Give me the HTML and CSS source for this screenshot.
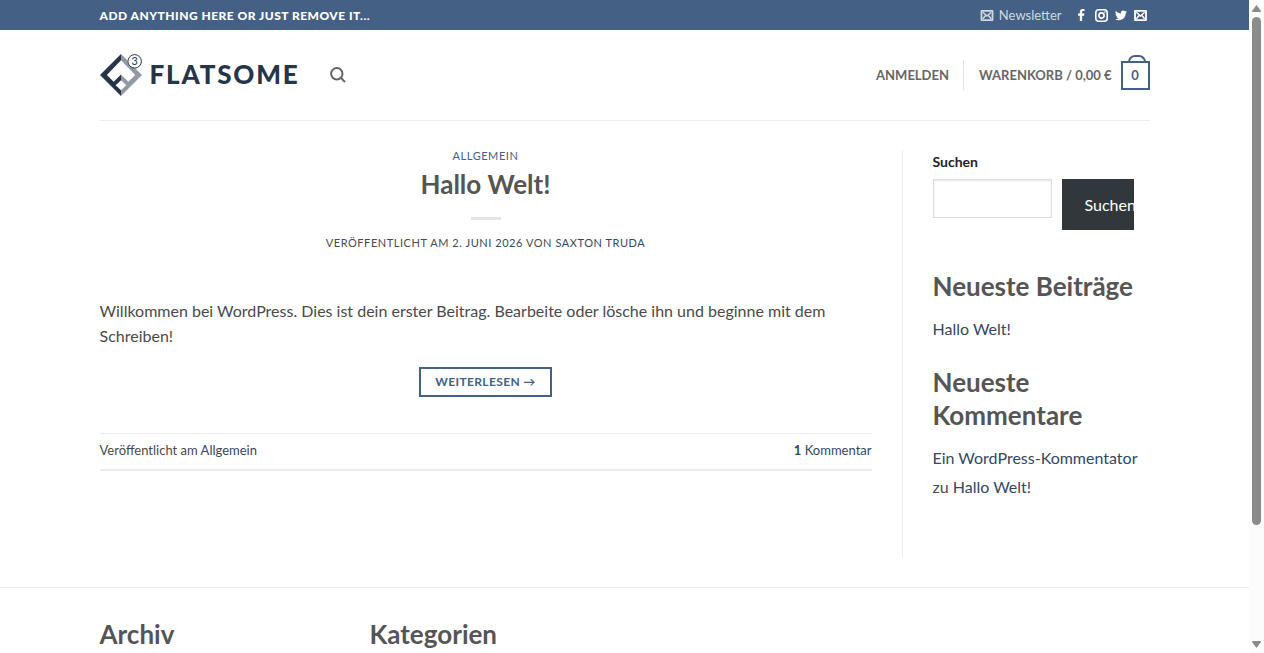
FILE: index.html
```
<!DOCTYPE html>
<html lang="de">
<head>
    <meta charset="UTF-8">
    <meta name="viewport" content="width=device-width, initial-scale=1">
    <title>Flatsome</title>
    <link rel="stylesheet" href="styles.css">
</head>
<body>
<div class="page">
    <header>
        <div class="top-bar">
            <div class="container top-inner">
                <strong class="top-text">Add anything here or just remove it...</strong>
                <nav class="top-nav">
                    <a class="newsletter" href="#">
                        <svg class="icon-mail" viewBox="0 0 14 12"><path fill-rule="evenodd" d="M1 0H13Q14 0 14 1V11Q14 12 13 12H1Q0 12 0 11V1Q0 0 1 0ZM2 2V10H12V2Z"/><path class="line" d="M2.500 2.500L7 6.500L11.500 2.500M2.500 9.500L5.500 6M11.500 9.500L8.500 6"/></svg>
                        Newsletter
                    </a>
                    <span class="social">
                        <a href="#" aria-label="Facebook"><svg class="icon-fb" viewBox="0 0 8 13"><path d="M2.200 13V7.200H.3V4.800H2.200V3.100C2.200 1.100 3.300 0 5.200 0C6.200 0 7 .1 7.200.1V2.200H5.900C4.900 2.200 4.700 2.700 4.700 3.400V4.800H7.100L6.800 7.200H4.700V13Z"/></svg></a>
                        <a href="#" aria-label="Instagram"><svg class="icon-ig" viewBox="0 0 13 13"><rect class="ring" x=".8" y=".8" width="11.400" height="11.400" rx="3"/><circle class="ring" cx="6.500" cy="6.500" r="2.600"/><circle cx="9.900" cy="3.100" r=".8"/></svg></a>
                        <a href="#" aria-label="Twitter"><svg class="icon-tw" viewBox="0 0 24 20"><path d="M24 2.400a10 10 0 0 1-2.800.8A5 5 0 0 0 23.300.5a10 10 0 0 1-3.100 1.200 4.900 4.900 0 0 0-8.400 4.500A14 14 0 0 1 1.700 1a4.900 4.900 0 0 0 1.500 6.600A5 5 0 0 1 1 7v.1a4.900 4.900 0 0 0 3.900 4.800 5 5 0 0 1-2.200.1 4.900 4.900 0 0 0 4.600 3.400A10 10 0 0 1 0 17.500a14 14 0 0 0 7.500 2.200c9.100 0 14-7.500 14-14V5A10 10 0 0 0 24 2.400Z"/></svg></a>
                        <a href="#" aria-label="E-Mail"><svg class="icon-mail" viewBox="0 0 14 12"><path fill-rule="evenodd" d="M1 0H13Q14 0 14 1V11Q14 12 13 12H1Q0 12 0 11V1Q0 0 1 0ZM2 2V10H12V2Z"/><path class="line" d="M2.500 2.500L7 6.500L11.500 2.500M2.500 9.500L5.500 6M11.500 9.500L8.500 6"/></svg></a>
                    </span>
                </nav>
            </div>
        </div>

        <div class="container">
            <div class="header-main">
                <a class="logo" href="#">
                    <svg class="logo-mark" viewBox="0 0 43 43">
                        <path class="dark" d="M21.500 0V6.500L7 21.500L14 28.500L21.500 21V27L16 32L21.500 37V43L0 21.500Z"/>
                        <path class="grey" d="M21.500 0L28 6.500Q28 10 30 12.500Q32 14.500 36 14.500L43 21.500L21.500 43V37L27 32L21.500 27V21L29 28.500L36 21.500L21.500 6.500Z"/>
                        <circle cx="35.500" cy="7.500" r="6.900"/>
                        <text x="35.500" y="11.300">3</text>
                    </svg>
                    <span class="logo-text">FLATSOME</span>
                </a>
                <a class="search-link" href="#" aria-label="Suche">
                    <svg class="icon-search" viewBox="0 0 16 16"><circle cx="6.800" cy="6.800" r="5.700"/><path d="M11 11L15 15"/></svg>
                </a>
                <nav class="header-nav">
                    <a class="login" href="#">Anmelden</a>
                    <a class="cart" href="#">Warenkorb / 0,00 € <span class="cart-icon">0</span></a>
                </nav>
            </div>
        </div>
    </header>

    <div class="container content">
        <main class="blog">
            <article>
                <div class="entry-header">
                    <a class="category" href="#">Allgemein</a>
                    <h2><a href="#">Hallo Welt!</a></h2>
                    <div class="divider"></div>
                    <p class="meta">Veröffentlicht am <a href="#">2. Juni 2026</a> von <a href="#">Saxton Truda</a></p>
                </div>
                <p class="entry-text">Willkommen bei WordPress. Dies ist dein erster Beitrag. Bearbeite oder lösche ihn und beginne mit dem Schreiben!</p>
                <div class="more">
                    <a class="more-link" href="#">Weiterlesen <span>→</span></a>
                </div>
                <footer class="entry-footer">
                    <span>Veröffentlicht am <a href="#">Allgemein</a></span>
                    <a href="#"><strong>1</strong> Kommentar</a>
                </footer>
            </article>
        </main>

        <aside class="sidebar">
            <form class="search-form">
                <label for="s">Suchen</label>
                <div class="search-row">
                    <input type="search" id="s">
                    <button type="button">Suchen</button>
                </div>
            </form>
            <section class="widget">
                <h2>Neueste Beiträge</h2>
                <p><a href="#">Hallo Welt!</a></p>
            </section>
            <section class="widget">
                <h2>Neueste Kommentare</h2>
                <p><a href="#">Ein WordPress-Kommentator</a> zu <a href="#">Hallo Welt!</a></p>
            </section>
        </aside>
    </div>

    <footer class="footer">
        <div class="container footer-row">
            <h2>Archiv</h2>
            <h2>Kategorien</h2>
        </div>
    </footer>
</div>

<div class="scrollbar">
    <svg viewBox="0 0 9 7"><path d="M4.500 0L9 6Q9 7 8 7H1Q0 7 0 6Z"/></svg>
    <div class="track"><div class="thumb"></div></div>
    <svg viewBox="0 0 9 7"><path d="M4.500 7L9 1Q9 0 8 0H1Q0 0 0 1Z"/></svg>
</div>
</body>
</html>
```

FILE: styles.css
```
* {
    box-sizing: border-box;
}

body {
    margin: 0;
    display: flex;
    height: 100vh;
    overflow: hidden;
    background: #fff;
    color: #4a4a4a;
    font-family: Lato, "Open Sans", sans-serif;
    font-size: 16px;
    line-height: 25px;
}

a {
    color: #334862;
    text-decoration: none;
}

h2 {
    margin: 0;
    color: #555;
    font-size: 26px;
    line-height: 33px;
    font-weight: 700;
}

p {
    margin: 0;
}

svg {
    display: block;
    fill: currentColor;
}

.page {
    flex: 1;
    min-width: 0;
    overflow: hidden;
}

.container {
    max-width: 1080px;
    margin: 0 auto;
    padding: 0 15px;
}

/* top bar */
.top-bar {
    background: #446084;
}

.top-inner {
    display: flex;
    justify-content: space-between;
    align-items: center;
    height: 30px;
}

.top-text {
    color: #fff;
    font-size: 12px;
    font-weight: 900;
    letter-spacing: 0.04em;
    text-transform: uppercase;
}

.top-nav,
.newsletter,
.social {
    display: flex;
    align-items: center;
}

.top-nav {
    gap: 13px;
    padding-right: 3px;
}

.newsletter {
    gap: 5px;
    color: #d1d8e1;
    font-size: 13px;
}

.social {
    gap: 7px;
}

.social a {
    color: #fff;
}

.icon-mail {
    width: 14px;
    height: 11px;
}

.social .icon-mail {
    width: 13px;
}

.icon-mail .line {
    fill: none;
    stroke: currentColor;
    stroke-width: 1.6;
}

.icon-fb {
    width: 13px;
    height: 12px;
}

.icon-ig {
    width: 13px;
    height: 13px;
}

.icon-ig .ring {
    fill: none;
    stroke: currentColor;
    stroke-width: 1.6;
}

.icon-tw {
    width: 12px;
    height: 11px;
}

/* header */
.header-main {
    display: flex;
    align-items: center;
    height: 91px;
    border-bottom: 1px solid #ececec;
}

.logo {
    display: flex;
    align-items: center;
    gap: 8px;
    color: #26354a;
}

.logo-mark {
    width: 42px;
    height: 42px;
}

.logo-mark .dark {
    fill: #26354a;
}

.logo-mark .grey {
    fill: #9299a4;
}

.logo-mark circle {
    fill: none;
    stroke: #26354a;
}

.logo-mark text {
    font-size: 11px;
    text-anchor: middle;
}

.logo-text {
    padding-bottom: 2px;
    font-size: 26px;
    font-weight: 900;
    letter-spacing: 0.07em;
}

.search-link {
    margin-left: 30px;
    color: #666;
}

.icon-search {
    width: 16px;
    height: 16px;
    fill: none;
    stroke: currentColor;
    stroke-width: 2;
}

.header-nav {
    display: flex;
    align-items: center;
    margin-left: auto;
    line-height: 30px;
    font-size: 13px;
    font-weight: 700;
    text-transform: uppercase;
}

.header-nav a {
    color: #666;
}

.login {
    padding-right: 14px;
    border-right: 1px solid #e2e2e2;
}

.cart {
    display: flex;
    align-items: center;
    gap: 9px;
    padding-left: 15px;
}

.cart-icon {
    position: relative;
    width: 29px;
    height: 29px;
    margin-top: 1px;
    border: 2px solid #446084;
    color: #446084;
    line-height: 24px;
    text-align: center;
}

.cart-icon::after {
    content: "";
    position: absolute;
    left: 50%;
    bottom: 100%;
    width: 14px;
    height: 6px;
    margin-left: -7px;
    border: 2px solid #446084;
    border-bottom: 0;
    border-radius: 7px 7px 0 0;
}

/* blog */
.content {
    display: flex;
    gap: 30px;
    padding-top: 29px;
    padding-bottom: 30px;
}

.blog {
    flex: 1;
    min-width: 0;
}

.entry-header {
    display: flex;
    flex-direction: column;
    align-items: center;
    padding-bottom: 47px;
}

.category {
    font-size: 11px;
    line-height: 11px;
    letter-spacing: 0.05em;
    text-transform: uppercase;
    color: #446084;
    margin-bottom: 7px;
}

.entry-header h2 a {
    color: #555;
}

.divider {
    width: 30px;
    height: 3px;
    margin: 16px 0 15px;
    background: #e5e5e5;
}

.meta {
    font-size: 11px;
    line-height: 16px;
    letter-spacing: 0.05em;
    text-transform: uppercase;
}

.more {
    padding: 19px 0 36px;
    text-align: center;
}

.more-link {
    display: inline-block;
    padding: 0 14px;
    border: 2px solid #446084;
    color: #446084;
    font-size: 12px;
    font-weight: 700;
    line-height: 26px;
    letter-spacing: 0.03em;
    text-transform: uppercase;
    vertical-align: top;
}

.entry-footer {
    display: flex;
    justify-content: space-between;
    padding: 6px 0 8px;
    border-top: 1px solid #ececec;
    border-bottom: 2px solid #ececec;
    font-size: 13px;
    line-height: 21px;
}

/* sidebar */
.sidebar {
    width: 248px;
    padding: 0 0 33px 30px;
    border-left: 1px solid #ececec;
}

.search-form {
    padding-right: 16px;
    margin-bottom: 40px;
}

.search-form label {
    display: block;
    color: #222;
    font-size: 14px;
    font-weight: 700;
    line-height: 23px;
    margin-bottom: 6px;
}

.search-row {
    display: flex;
    align-items: flex-start;
    gap: 10px;
}

.search-row input {
    flex: 1;
    min-width: 0;
    height: 39px;
    border: 1px solid #ddd;
    box-shadow: inset 0 1px 2px rgba(0, 0, 0, 0.1);
    background: #fff;
}

.search-row button {
    width: 72px;
    height: 51px;
    padding: 0 0 0 23px;
    border: 0;
    overflow: hidden;
    background: #32373c;
    color: #fff;
    font: inherit;
    text-align: left;
    white-space: nowrap;
}

.widget {
    margin-bottom: 23px;
}

.widget h2 {
    margin-bottom: 11px;
}

.widget p {
    line-height: 29px;
}

/* footer */
.footer {
    border-top: 1px solid #ececec;
    padding: 30px 0;
}

.footer-row {
    display: grid;
    grid-template-columns: repeat(4, 1fr);
    column-gap: 30px;
}

/* scrollbar */
.scrollbar {
    display: flex;
    flex-direction: column;
    align-items: center;
    gap: 5px;
    width: 15px;
    padding: 5px 0;
    background: #fcfcfc;
    color: #8b8b8b;
}

.scrollbar svg {
    width: 9px;
    height: 7px;
}

.track {
    flex: 1;
}

.thumb {
    width: 9px;
    height: 82%;
    border-radius: 5px;
    background: #8b8b8b;
}
```
